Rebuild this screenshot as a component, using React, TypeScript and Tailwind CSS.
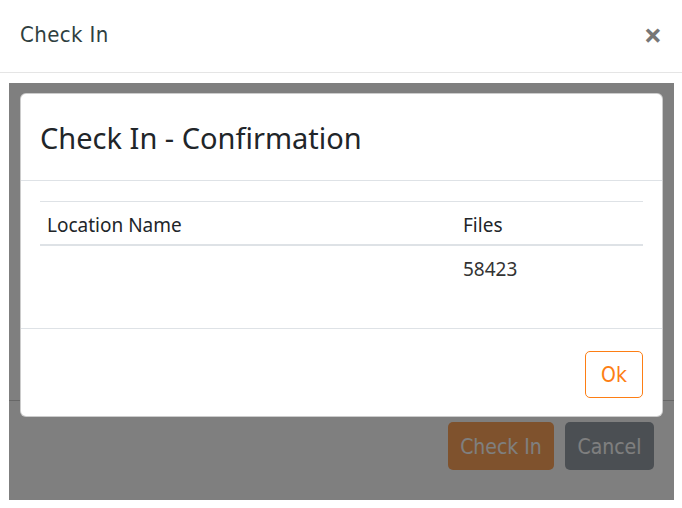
import React from 'react';

const outerFont = { fontFamily: '"Liberation Sans Narrow", "DejaVu Sans Condensed", "Liberation Sans", sans-serif' };

export default function App() {
  return (
    <div className="w-[682px] h-[508px] bg-white flex flex-col" style={{ fontFamily: '"Noto Sans", "Open Sans", sans-serif' }}>
      {/* Outer modal header */}
      <div className="h-[73px] shrink-0 border-b border-[#e5e5e5] flex items-center justify-between pl-5 pr-[20px]">
        <h2 className="text-[22px] font-light text-[#2f3f3f] tracking-[0.4px] -mt-[3px]" style={outerFont}>
          Check In
        </h2>
        <button className="text-[#777] text-[32px] font-bold leading-none -mt-[2px]">×</button>
      </div>

      {/* Outer modal body (covered by backdrop) */}
      <div className="flex-1 pl-[9px] pr-[8px] pt-[10px] pb-[8px]">
        <div className="relative h-full">
          <div className="h-full flex flex-col">
            <div className="h-[318px] border-b border-[#cfcfcf]" />
            <div className="flex justify-end gap-[11px] pt-[21px] pr-[20px]">
              <button
                className="h-[48px] w-[106px] rounded-[5px] bg-[#ffa45a] text-white text-[21px] pt-[4px]"
                style={outerFont}
              >
                Check In
              </button>
              <button
                className="h-[48px] w-[89px] rounded-[5px] bg-[#979fa7] text-white text-[21px] pt-[4px]"
                style={outerFont}
              >
                Cancel
              </button>
            </div>
          </div>

          {/* Backdrop */}
          <div className="absolute inset-0 bg-black/50" />

          {/* Confirmation dialog */}
          <div className="absolute left-[11px] top-[10px] w-[643px] h-[324px] bg-white rounded-[6px] border border-black/20 flex flex-col">
            <div className="h-[87px] shrink-0 border-b border-[#dee2e6] flex items-center px-[19px]">
              <h3 className="text-[29px] text-[#212529] leading-none">Check In - Confirmation</h3>
            </div>
            <div className="h-[148px] shrink-0 border-b border-[#dee2e6] px-[19px] pt-[20px]">
              <table className="w-full text-[19px] text-[#212529] border-collapse">
                <thead>
                  <tr className="border-t border-[#dee2e6] border-b-2">
                    <th className="text-left font-normal px-[7px] h-[43px] align-middle pt-[4px]">Location Name</th>
                    <th className="text-left font-normal px-[7px] h-[43px] align-middle pt-[4px] w-[187px]">Files</th>
                  </tr>
                </thead>
                <tbody>
                  <tr>
                    <td className="px-[7px] h-[46px]"></td>
                    <td className="px-[7px] h-[46px] text-[#333] pt-[2px]">58423</td>
                  </tr>
                </tbody>
              </table>
            </div>
            <div className="flex-1 flex items-center justify-end px-[19px] pt-[3px]">
              <button className="h-[47px] w-[58px] rounded-[5px] border border-[#fd7e14] text-[#fd7e14] text-[21px] pt-[3px]" style={outerFont}>
                Ok
              </button>
            </div>
          </div>
        </div>
      </div>
    </div>
  );
}
